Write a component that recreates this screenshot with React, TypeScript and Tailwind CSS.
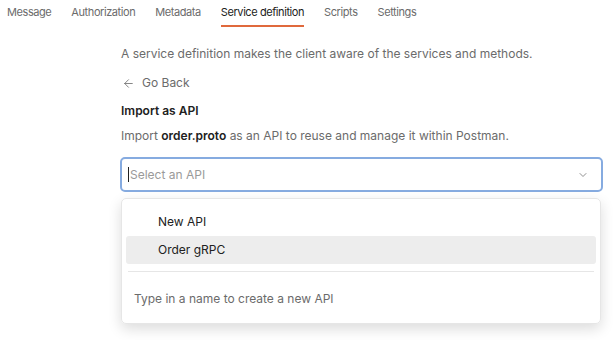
import { ArrowLeft, ChevronDown } from "lucide-react"

const tabs = ["Message", "Authorization", "Metadata", "Service definition", "Scripts", "Settings"]

export default function App() {
    return (
        <div className="w-[616px] h-[340px] bg-white overflow-hidden text-[12px] text-[#212121]" style={{ fontFamily: "Inter, 'Noto Sans', sans-serif" }}>
            <div className="flex gap-[20px] pl-[7px] h-[27px]">
                {tabs.map((t) => (
                    <div
                        key={t}
                        className={
                            t === "Service definition"
                                ? "h-full pt-[4px] border-b-2 border-[#e0693c] text-[#212121] text-[11px] tracking-[-0.42px]"
                                : "h-full pt-[4px] text-[#6b6b6b] text-[11px] tracking-[-0.42px]"
                        }
                    >
                        {t}
                    </div>
                ))}
            </div>
            <div className="ml-[120px] w-[483px]">
                <p className="mt-[19px] pl-[1px] text-[#6b6b6b] leading-[16px]">
                    A service definition makes the client aware of the services and methods.
                </p>
                <div className="mt-[13px] flex items-center gap-[7px] pl-[2px] text-[#6b6b6b] leading-[16px]">
                    <ArrowLeft className="w-[13px] h-[13px]" strokeWidth={1.5} />
                    <span>Go Back</span>
                </div>
                <p className="mt-[12px] pl-[1px] font-semibold leading-[16px]">Import as API</p>
                <p className="mt-[9px] pl-[1px] text-[#6b6b6b] leading-[16px]">
                    Import <span className="font-semibold text-[#212121]">order.proto</span> as an API to reuse and manage it within Postman.
                </p>
                <div className="mt-[13px] h-[35px] rounded-[5px] border-2 border-[#86abe0] flex items-center pl-[6px] pr-[12px]">
                    <span className="w-px h-[15px] bg-[#212121] mr-px" />
                    <span className="flex-1 text-[#9a9a9a]">Select an API</span>
                    <ChevronDown className="w-[12px] h-[12px] text-[#6b6b6b]" strokeWidth={1.5} />
                </div>
                <div className="mt-[6px] mr-[2px] ml-px h-[126px] rounded-[5px] border border-[#e6e6e6] shadow-[0_5px_14px_rgba(0,0,0,0.14)] px-[4px] pt-[9px]">
                    <div className="h-[28px] flex items-center pl-[32px] rounded-[3px]">New API</div>
                    <div className="h-[28px] flex items-center pl-[32px] rounded-[3px] bg-[#ededed]">Order gRPC</div>
                    <div className="mt-[7px] border-t border-[#e6e6e6] ml-[2px] mr-[2px]" />
                    <div className="mt-[19px] pl-[8px] text-[#6b6b6b] leading-[16px]">Type in a name to create a new API</div>
                </div>
            </div>
        </div>
    )
}
